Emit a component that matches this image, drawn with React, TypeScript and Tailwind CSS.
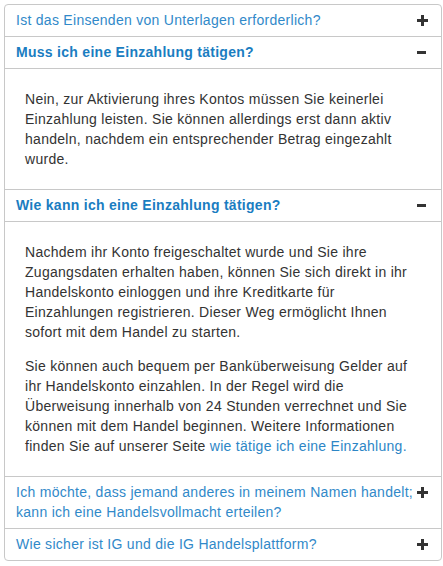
import React, { useState } from 'react';

interface FaqItem {
    id: string;
    question: string;
    answer?: React.ReactNode[];
}

const faqs: FaqItem[] = [
    { id: 'unterlagen', question: 'Ist das Einsenden von Unterlagen erforderlich?' },
    {
        id: 'muss',
        question: 'Muss ich eine Einzahlung tätigen?',
        answer: [
            'Nein, zur Aktivierung ihres Kontos müssen Sie keinerlei Einzahlung leisten. Sie können allerdings erst dann aktiv handeln, nachdem ein entsprechender Betrag eingezahlt wurde.',
        ],
    },
    {
        id: 'wie',
        question: 'Wie kann ich eine Einzahlung tätigen?',
        answer: [
            'Nachdem ihr Konto freigeschaltet wurde und Sie ihre Zugangsdaten erhalten haben, können Sie sich direkt in ihr Handelskonto einloggen und ihre Kreditkarte für Einzahlungen registrieren. Dieser Weg ermöglicht Ihnen sofort mit dem Handel zu starten.',
            <>
                Sie können auch bequem per Banküberweisung Gelder auf ihr Handelskonto einzahlen. In der Regel wird die Überweisung innerhalb von 24 Stunden verrechnet und Sie können mit dem Handel beginnen. Weitere Informationen finden Sie auf unserer Seite{' '}
                <a href="#" className="text-[#2d86c6]">wie tätige ich eine Einzahlung.</a>
            </>,
        ],
    },
    { id: 'vollmacht', question: 'Ich möchte, dass jemand anderes in meinem Namen handelt; kann ich eine Handelsvollmacht erteilen?' },
    { id: 'sicher', question: 'Wie sicher ist IG und die IG Handelsplattform?' },
];

const PlusIcon = () => (
    <svg width="11" height="11" viewBox="0 0 11 11" className="block">
        <rect x="0" y="4" width="11" height="3" fill="#333" />
        <rect x="4" y="0" width="3" height="11" fill="#333" />
    </svg>
);

const MinusIcon = () => (
    <svg width="9" height="3" viewBox="0 0 9 3" className="block">
        <rect x="0" y="0" width="9" height="3" fill="#333" />
    </svg>
);

export default function App() {
    const [open, setOpen] = useState<string[]>(['muss', 'wie']);

    const toggle = (id: string) =>
        setOpen(prev => (prev.includes(id) ? prev.filter(x => x !== id) : [...prev, id]));

    return (
        <div className="pt-1 pl-1 bg-white min-h-[566px] font-['Liberation_Sans',Arial,sans-serif] text-[14px] leading-[20px] tracking-[0.28px]">
            <div className="w-[438px] border border-[#c8c8c8] rounded-[4px] bg-white">
                {faqs.map((item, i) => {
                    const isOpen = open.includes(item.id);
                    return (
                        <div key={item.id} className={i > 0 ? 'border-t border-[#c8c8c8]' : ''}>
                            {/* Kopfzeile */}
                            <button
                                onClick={() => toggle(item.id)}
                                className="w-full flex items-start gap-[2px] pl-[11px] pr-[13px] pt-[5px] pb-[6px] text-left cursor-pointer"
                            >
                                <span className={`flex-1 ${isOpen ? 'font-bold text-[#1a7dc1]' : 'text-[#3189c9]'}`}>
                                    {item.question}
                                </span>
                                <span className="w-[11px] h-5 flex items-center">
                                    {isOpen ? <MinusIcon /> : <PlusIcon />}
                                </span>
                            </button>

                            {isOpen && item.answer && (
                                <div className="border-t border-[#c8c8c8] p-5 text-[#333]">
                                    {item.answer.map((para, j) => (
                                        <p key={j} className={j < item.answer!.length - 1 ? 'mb-[14px]' : ''}>
                                            {para}
                                        </p>
                                    ))}
                                </div>
                            )}
                        </div>
                    );
                })}
            </div>
        </div>
    );
}
